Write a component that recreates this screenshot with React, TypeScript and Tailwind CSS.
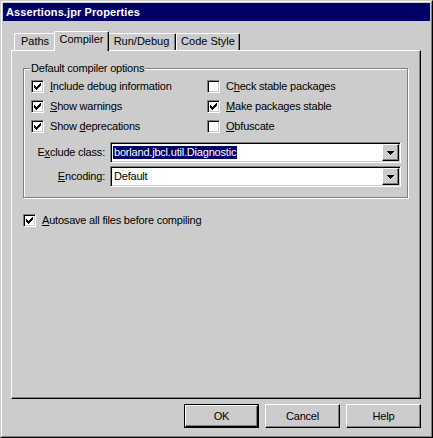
import type { ReactNode } from 'react';

const CHECK_PIXELS = [
  [6],
  [5, 6],
  [0, 4, 5, 6],
  [0, 1, 3, 4, 5],
  [0, 1, 2, 3, 4],
  [1, 2, 3],
  [2],
];

function CheckBox({ checked }: { checked: boolean }) {
  return (
    <span className="flex h-[13px] w-[13px] shrink-0 items-center justify-center border border-t-[#808080] border-l-[#808080] border-b-white border-r-white bg-white shadow-[inset_1px_1px_0_#000,inset_-1px_-1px_0_#cccccc]">
      {checked && (
        <svg width="7" height="7" viewBox="0 0 7 7" shapeRendering="crispEdges">
          {CHECK_PIXELS.map((row, y) =>
            row.map((x) => <rect key={`${x}-${y}`} x={x} y={y} width="1" height="1" fill="#000" />)
          )}
        </svg>
      )}
    </span>
  );
}

function Option({ checked, children }: { checked: boolean; children: ReactNode }) {
  return (
    <div className="flex h-[13px] items-center gap-[6px]">
      <CheckBox checked={checked} />
      <span className="leading-[13px] whitespace-nowrap">{children}</span>
    </div>
  );
}

function Combo({ children }: { children: ReactNode }) {
  return (
    <div className="flex h-[21px] w-[291px] border border-t-[#808080] border-l-[#808080] border-b-white border-r-white bg-white p-px shadow-[inset_1px_1px_0_#000,inset_-1px_-1px_0_#cccccc]">
      <div className="flex flex-1 items-center pl-[1px]">{children}</div>
      <div className="flex w-[17px] items-center justify-center border border-t-white border-l-white border-b-black border-r-black bg-[#cccccc] shadow-[inset_-1px_-1px_0_#808080]">
        <svg width="7" height="4" viewBox="0 0 7 4" shapeRendering="crispEdges">
          <rect x="0" y="0" width="7" height="1" fill="#000" />
          <rect x="1" y="1" width="5" height="1" fill="#000" />
          <rect x="2" y="2" width="3" height="1" fill="#000" />
          <rect x="3" y="3" width="1" height="1" fill="#000" />
        </svg>
      </div>
    </div>
  );
}

function Tab({ label, width, active }: { label: string; width: string; active?: boolean }) {
  return active ? (
    <div
      className={`relative z-10 -mx-[2px] -mb-px flex h-[20px] ${width} justify-center rounded-t-[2px] border-t border-l border-r border-t-white border-l-white border-r-black bg-[#cccccc] pt-[1px] shadow-[inset_-1px_0_0_#808080]`}
    >
      {label}
    </div>
  ) : (
    <div
      className={`flex h-[17px] ${width} justify-center rounded-t-[2px] border-t border-l border-r border-t-white border-l-white border-r-black bg-[#cccccc] pt-[1px] shadow-[inset_-1px_0_0_#808080]`}
    >
      {label}
    </div>
  );
}

function Button({ label, isDefault }: { label: string; isDefault?: boolean }) {
  const face = (
    <div className="flex h-full w-full items-center justify-center border border-t-white border-l-white border-b-black border-r-black bg-[#cccccc] shadow-[inset_-1px_-1px_0_#808080]">
      {label}
    </div>
  );
  return isDefault ? (
    <div className="h-[24px] w-[75px] border border-black">{face}</div>
  ) : (
    <div className="h-[24px] w-[75px]">{face}</div>
  );
}

export default function App() {
  return (
    <div className="h-[438px] w-[433px] bg-[#cccccc] font-['Liberation_Sans',Arial,sans-serif] text-[11px] leading-[13px] tracking-[-0.2px] text-black">
      {/* window frame */}
      <div className="h-full w-full border border-t-[#cccccc] border-l-[#cccccc] border-b-black border-r-black">
        <div className="flex h-full w-full flex-col border border-t-white border-l-white border-b-[#808080] border-r-[#808080] p-px">
          {/* title bar */}
          <div className="flex h-[18px] shrink-0 items-center bg-[#000066] pl-[3px] text-[11px] font-bold tracking-[0.1px] text-white">
            Assertions.jpr Properties
          </div>

          {/* tabs */}
          <div className="ml-[8px] mr-[9px] mt-[10px] flex h-[19px] items-end pl-[3px] tracking-normal">
            <Tab label="Paths" width="w-[42px]" />
            <Tab label="Compiler" width="w-[55px]" active />
            <Tab label="Run/Debug" width="w-[69px]" />
            <Tab label="Code Style" width="w-[64px]" />
          </div>

          {/* tab panel */}
          <div className="ml-[8px] mr-[9px] flex h-[349px] flex-col border border-t-white border-l-white border-b-black border-r-black px-[11px] pt-[17px] shadow-[inset_-1px_-1px_0_#808080]">
            {/* group box */}
            <div className="relative mr-px flex flex-col border border-[#808080] pb-[10px] pl-[7px] pr-[5px] pt-[11px] shadow-[1px_1px_0_#fff,inset_1px_1px_0_#fff]">
              <span className="absolute -top-[7px] left-[6px] bg-[#cccccc] px-px">Default compiler options</span>

              <div className="grid grid-cols-[176px_1fr] gap-y-[7px]">
                <Option checked>
                  <u>I</u>nclude debug information
                </Option>
                <Option checked={false}>
                  C<u>h</u>eck stable packages
                </Option>
                <Option checked>
                  <u>S</u>how warnings
                </Option>
                <Option checked>
                  <u>M</u>ake packages stable
                </Option>
                <Option checked>
                  Show <u>d</u>eprecations
                </Option>
                <Option checked={false}>
                  <u>O</u>bfuscate
                </Option>
              </div>

              <div className="mt-[9px] flex flex-col gap-[3px]">
                <div className="flex items-center">
                  <span className="w-[74px] text-right">
                    E<u>x</u>clude class:
                  </span>
                  <div className="ml-[5px]">
                    <Combo>
                      <span className="bg-[#000066] px-px text-white">borland.jbcl.util.Diagnostic</span>
                    </Combo>
                  </div>
                </div>
                <div className="flex items-center">
                  <span className="w-[74px] text-right">
                    <u>E</u>ncoding:
                  </span>
                  <div className="ml-[5px]">
                    <Combo>
                      <span className="px-px">Default</span>
                    </Combo>
                  </div>
                </div>
              </div>
            </div>

            <div className="mt-[16px] flex">
              <Option checked>
                <u>A</u>utosave all files before compiling
              </Option>
            </div>
          </div>

          {/* buttons */}
          <div className="mr-[9px] mt-[5px] flex justify-end gap-[6px]">
            <Button label="OK" isDefault />
            <Button label="Cancel" />
            <Button label="Help" />
          </div>
        </div>
      </div>
    </div>
  );
}
